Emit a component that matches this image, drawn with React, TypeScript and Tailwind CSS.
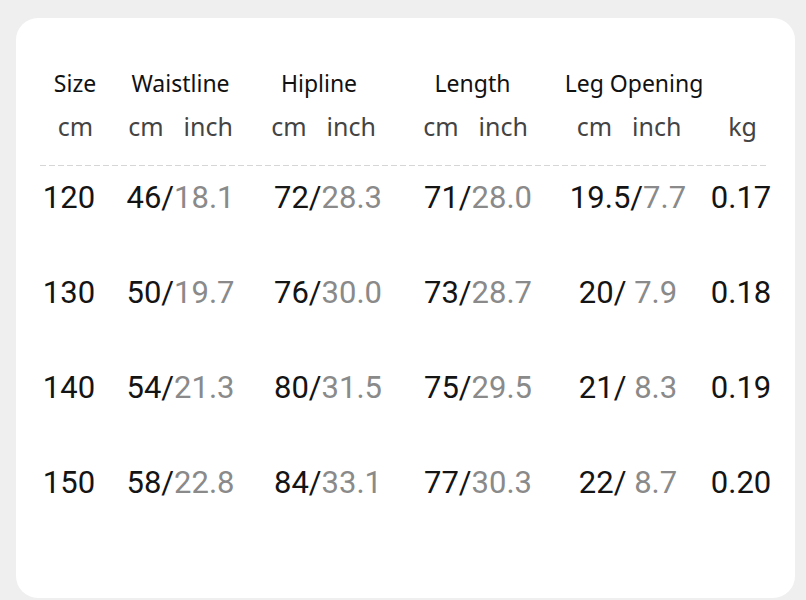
import React from 'react';

const COLS = 'grid grid-cols-[106px_117px_178px_122px_178px_48px]';

const rows = [
  { size: '120', w: ['46/', '18.1'], h: ['72/', '28.3'], l: ['71/', '28.0'], leg: ['19.5/', '7.7'], kg: '0.17' },
  { size: '130', w: ['50/', '19.7'], h: ['76/', '30.0'], l: ['73/', '28.7'], leg: ['20/', '\u00a07.9'], kg: '0.18' },
  { size: '140', w: ['54/', '21.3'], h: ['80/', '31.5'], l: ['75/', '29.5'], leg: ['21/', '\u00a08.3'], kg: '0.19' },
  { size: '150', w: ['58/', '22.8'], h: ['84/', '33.1'], l: ['77/', '30.3'], leg: ['22/', '\u00a08.7'], kg: '0.20' },
];

function Pair({ v }: { v: string[] }) {
  return (
    <div className="flex justify-center whitespace-nowrap">
      <span className="text-[#141414]">{v[0]}</span>
      <span className="text-[#8a8a8a]">{v[1]}</span>
    </div>
  );
}

function Units({ className = '' }: { className?: string }) {
  return (
    <div className={`flex justify-center gap-5 whitespace-nowrap ${className}`}>
      <span>cm</span>
      <span>inch</span>
    </div>
  );
}

export default function App() {
  return (
    <div className="w-[806px] h-[600px] bg-[#efefef] pt-[18px] pl-4 overflow-hidden">
      <div className="w-[779px] h-[580px] bg-white rounded-[22px] pt-[43px]">
        <div
          className={`${COLS} h-[44px] items-center text-[23px] text-[#111] font-['Noto_Sans',sans-serif]`}
        >
          <div className="flex justify-center pl-[12px]">Size</div>
          <div className="flex justify-center">Waistline</div>
          <div className="flex justify-center pr-[18px]">Hipline</div>
          <div className="flex justify-center pr-[11px]">Length</div>
          <div className="flex justify-center pl-[12px] whitespace-nowrap">Leg Opening</div>
          <div />
        </div>
        <div
          className={`${COLS} h-[44px] items-center text-[25px] text-[#444] font-['Noto_Sans',sans-serif]`}
        >
          <div className="flex justify-center pl-[13px]">cm</div>
          <Units />
          <Units className="pr-[9px]" />
          <Units className="pr-[5px]" />
          <Units className="pl-[2px]" />
          <div className="flex justify-center pl-[3px]">kg</div>
        </div>

        <div className="ml-6 mt-4 w-[727px] h-px bg-[repeating-linear-gradient(to_right,#d6d6d6_0_6px,transparent_6px_9px)]" />

        <div className="mt-[9px] flex flex-col gap-[55px] text-[31px] font-['Roboto',sans-serif]">
          {rows.map((r) => (
            <div key={r.size} className={`${COLS} h-10 items-center`}>
              <div className="flex justify-center text-[#141414]">{r.size}</div>
              <Pair v={r.w} />
              <Pair v={r.h} />
              <Pair v={r.l} />
              <Pair v={r.leg} />
              <div className="flex justify-center text-[#141414]">{r.kg}</div>
            </div>
          ))}
        </div>
      </div>
    </div>
  );
}
